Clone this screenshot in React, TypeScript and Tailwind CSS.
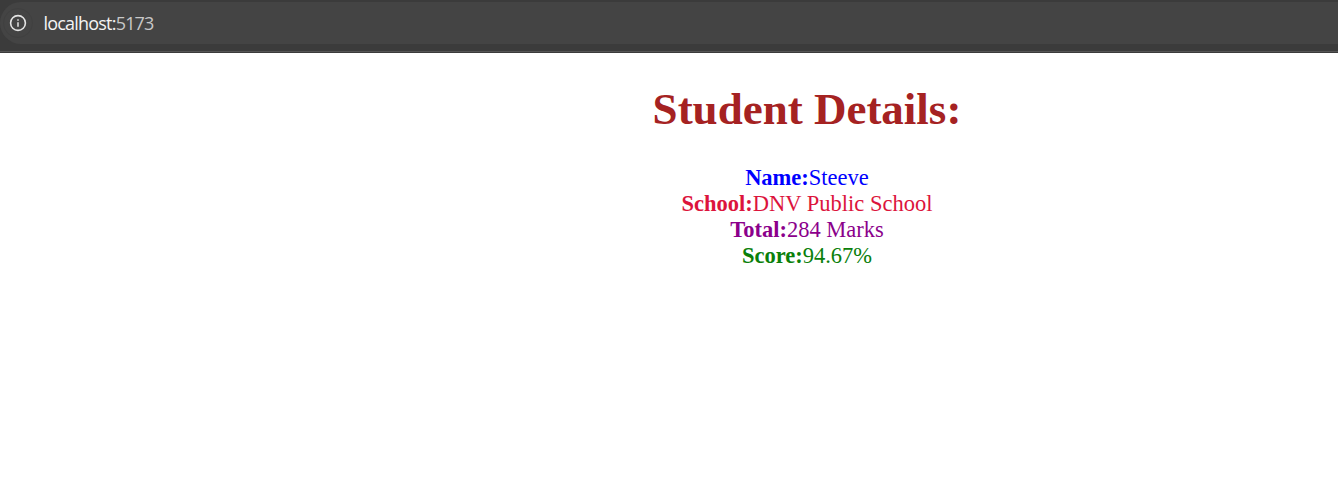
const rows = [
  { label: "Name:", value: "Steeve", color: "text-[#0000ff]" },
  { label: "School:", value: "DNV Public School", color: "text-[#dc143c]" },
  { label: "Total:", value: "284 Marks", color: "text-[#8b008b]" },
  { label: "Score:", value: "94.67%", color: "text-[#0a800a]" },
];

export default function App() {
  return (
    <div className="flex h-[480px] w-full flex-col overflow-hidden bg-white">
      <header className="h-[53px] border-b border-[#3b3b3b] bg-[#3b3b3b] pt-[2px]">
        <div className="flex h-[42px] items-center rounded-l-full bg-[#444444] pl-[3px]">
          <span className="flex size-[30px] items-center justify-center rounded-full border border-[#404040]">
            <svg className="size-[18px]" viewBox="0 0 18 18" fill="none" stroke="#e4e4e4">
              <circle cx="9" cy="9" r="7.4" strokeWidth="1.6" />
              <path d="M9 8.2v4.6M9 5.2v1.6" strokeWidth="1.5" />
            </svg>
          </span>
          <span className="ml-[10.5px] font-['Open_Sans',sans-serif] text-[18px] tracking-[-0.8px] text-[#f4f4f4]">
            localhost:<span className="text-[#c8c8c8]">5173</span>
          </span>
        </div>
        <div className="mt-[7px] h-px bg-[#555555]" />
      </header>
      <main className="flex flex-col items-center pl-[276px] font-['Liberation_Serif',serif]">
        <h1 className="mt-[30px] text-[45px] leading-[53px] font-bold text-[#a52222]">Student Details:</h1>
        <div className="mt-[29px] text-center text-[22.5px] leading-[26px]">
          {rows.map((r) => (
            <p key={r.label} className={r.color}>
              <b>{r.label}</b>
              {r.value}
            </p>
          ))}
        </div>
      </main>
    </div>
  );
}
